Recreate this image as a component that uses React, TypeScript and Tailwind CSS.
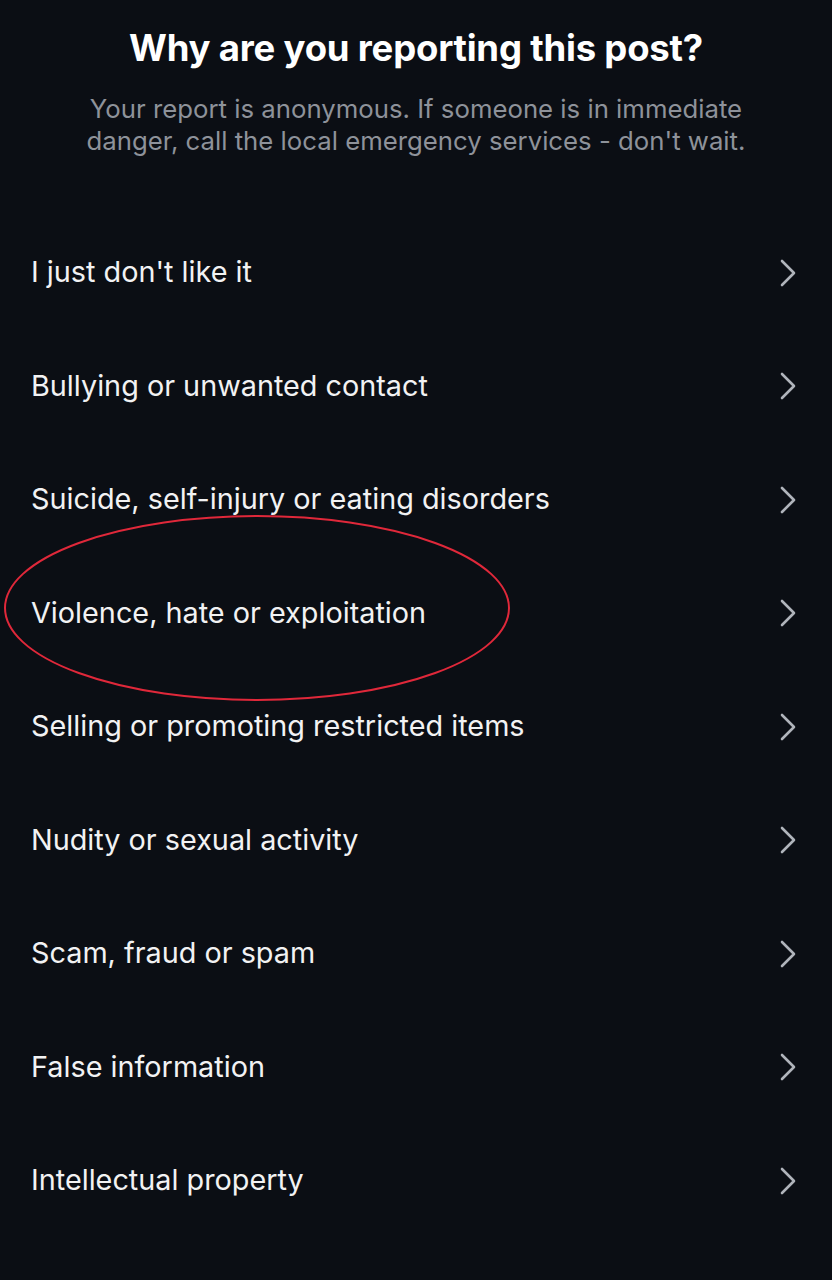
const reasons = [
	"I just don't like it",
	"Bullying or unwanted contact",
	"Suicide, self-injury or eating disorders",
	"Violence, hate or exploitation",
	"Selling or promoting restricted items",
	"Nudity or sexual activity",
	"Scam, fraud or spam",
	"False information",
	"Intellectual property"
];

export default function App() {
	return (
		<div
			className="min-h-[1280px] w-full overflow-hidden bg-[#0b0e14] text-white"
			style={{ fontFamily: "Inter, 'Noto Sans', sans-serif" }}
		>
			<div className="flex flex-col items-center pt-[26px]">
				<h1 className="text-[36.5px] font-bold leading-[44px] tracking-[-0.2px]">
					Why are you reporting this post?
				</h1>
				<p className="mt-[23px] text-center text-[25.75px] leading-[32px] text-[#8e929a]">
					Your report is anonymous. If someone is in immediate
					<br />
					danger, call the local emergency services - don't wait.
				</p>
			</div>
			<ul className="mt-[59px]">
				{reasons.map((reason, i) => (
					<li
						key={reason}
						className="relative flex h-[113.5px] cursor-pointer items-center justify-between pl-[31px] pr-[35px]"
					>
						<span className="text-[28.8px] leading-none text-[#f2f2f3]">{reason}</span>
						<svg className="h-[28px] w-[18px]" viewBox="0 0 18 28" fill="none">
							<polyline
								points="3,2 15,14 3,26"
								stroke="#b0b4bb"
								strokeWidth="2.6"
								strokeLinecap="round"
								strokeLinejoin="round"
							/>
						</svg>
						{i === 3 && (
							<svg
								className="pointer-events-none absolute left-0 top-[-42px] h-[190px] w-[520px]"
								viewBox="0 0 520 190"
							>
								<ellipse cx="257" cy="93" rx="252" ry="92" fill="none" stroke="#e0283a" strokeWidth="2" />
							</svg>
						)}
					</li>
				))}
			</ul>
		</div>
	);
}
